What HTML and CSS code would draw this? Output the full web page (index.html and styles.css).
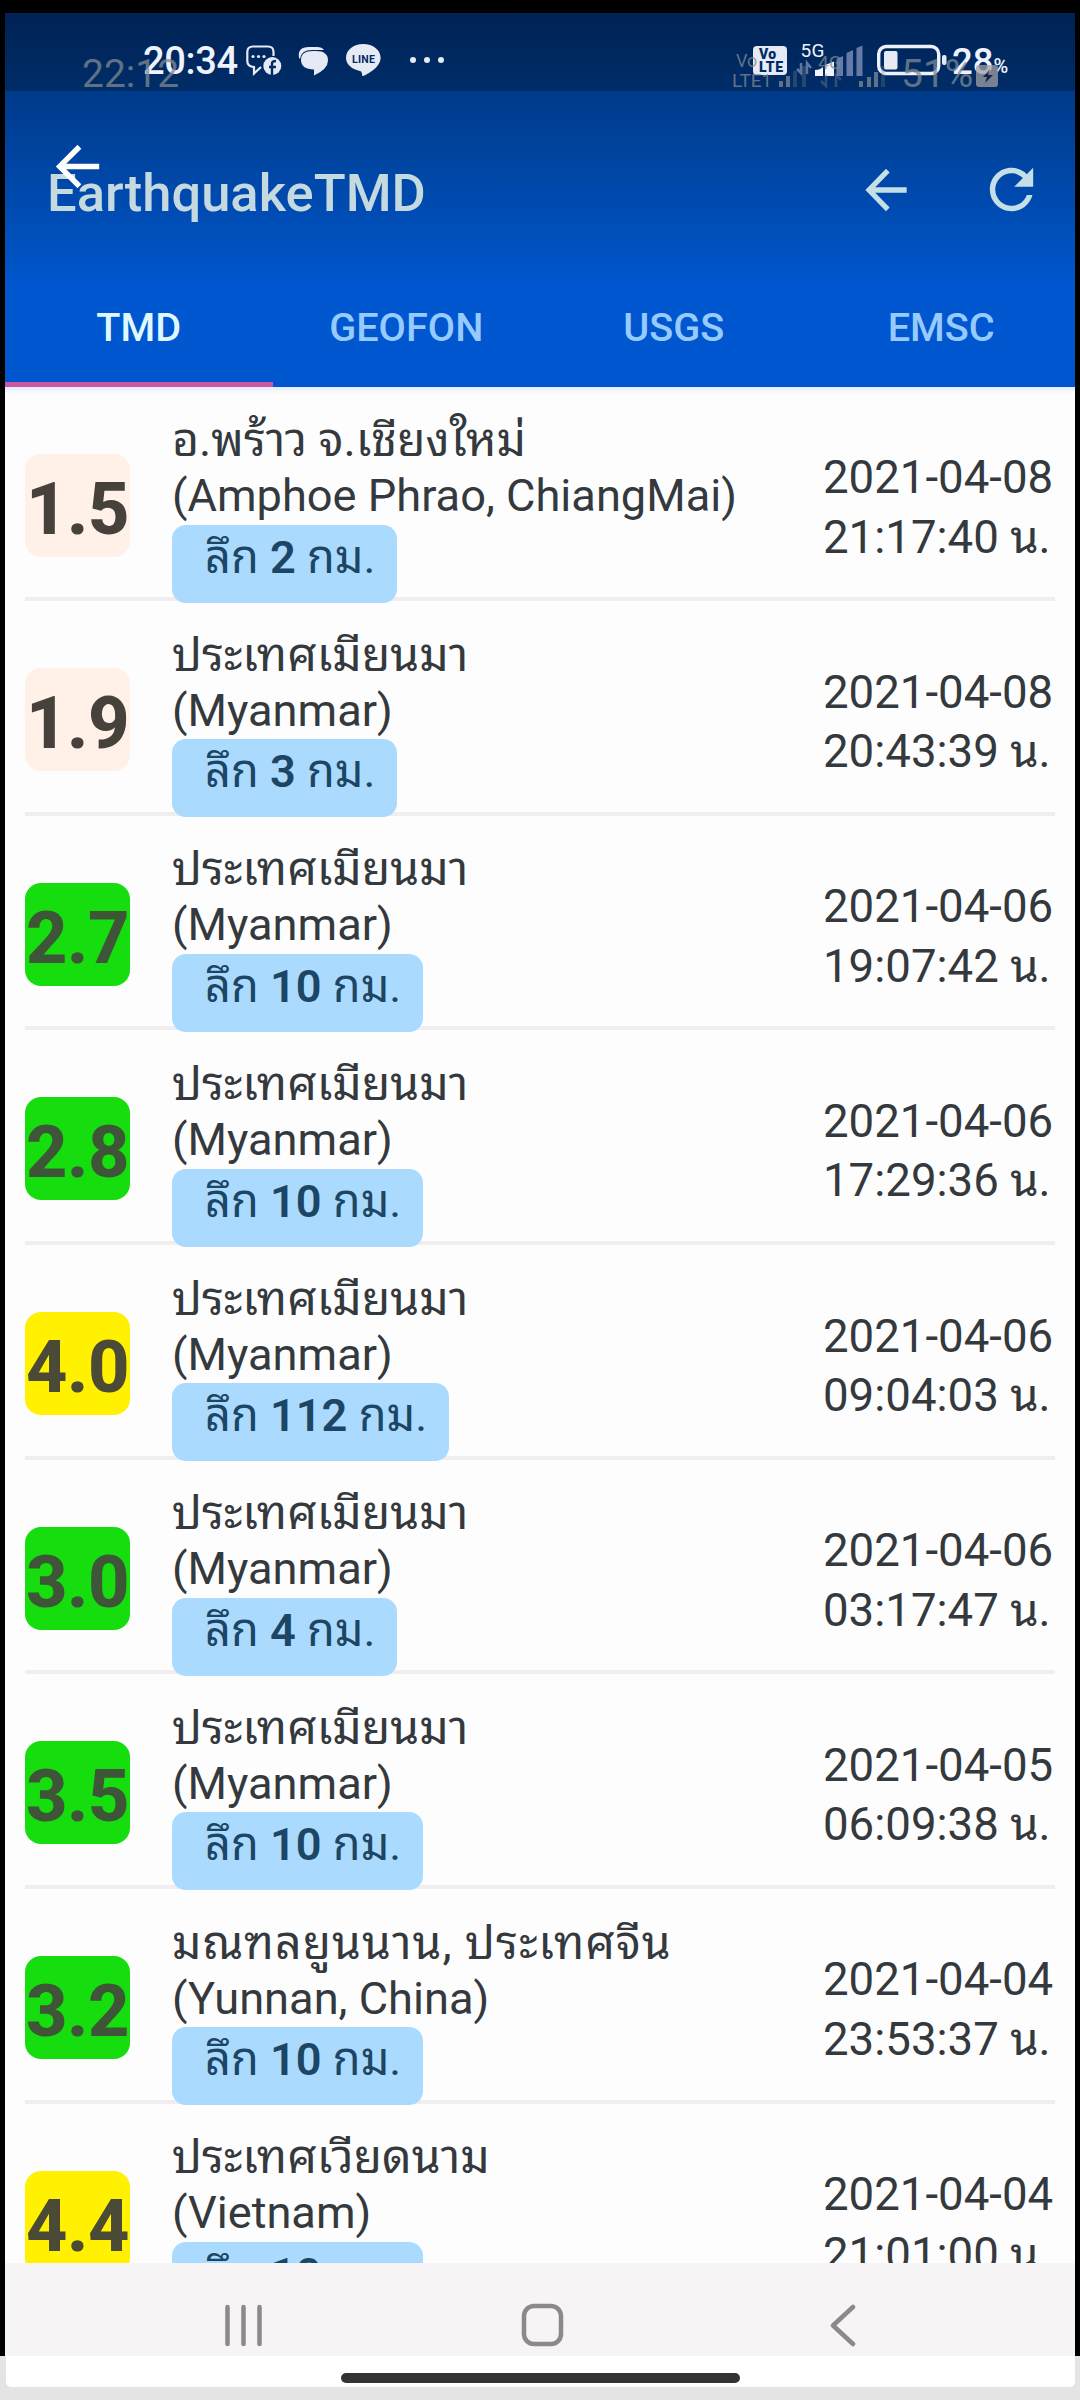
FILE: index.html
```html
<!DOCTYPE html>
<html lang="th">
<head>
<meta charset="utf-8">
<title>EarthquakeTMD</title>
<link rel="stylesheet" href="styles.css">
</head>
<body>
<div class="screen">
  <header class="header">
    <div class="statusbar">
      <span class="clock">20:34</span>
      <svg class="notif-icons" width="200" height="40" viewBox="244 40 200 40">
        <path d="M261 67L254 73.500V67Q247.300 66.500 247.300 61V52Q247.300 46.500 253 46.500H268Q273.500 46.500 273.500 52V56" fill="none" stroke="#e6eaf5" stroke-width="2.200"/>
        <circle cx="253" cy="56.500" r="1.600" fill="#e6eaf5"/><circle cx="258.500" cy="56.500" r="1.600" fill="#e6eaf5"/><circle cx="264" cy="56.500" r="1.600" fill="#e6eaf5"/>
        <circle cx="272.300" cy="66" r="9" fill="#e6eaf5"/>
        <path d="M272 75V63.500Q272 61 276 61M269 67H276" fill="none" stroke="#002a63" stroke-width="2.400"/>
        <path d="M299 58Q297 47 309 47H317Q322 47 324 50H312Q301 50 300 59Z" fill="#e6eaf5"/>
        <path d="M313 51H316Q328 51 328 60.500Q328 69 314 75.500V69.500Q301 69 301 60Q301 51 313 51Z" fill="#e6eaf5"/>
        <path d="M363.300 44C353.500 44 346 50 346 57.800C346 64.500 352 69.500 360.500 71.200C362.500 71.700 361.500 76.500 363.500 76C367 74.500 380.600 67.500 380.600 57.800C380.600 50 373 44 363.300 44Z" fill="#e6eaf5"/>
        <text x="352" y="62.500" class="line-label" textLength="23">LINE</text>
        <circle cx="413" cy="60" r="3" fill="#e6eaf5"/><circle cx="427" cy="60" r="3" fill="#e6eaf5"/><circle cx="441" cy="60" r="3" fill="#e6eaf5"/>
      </svg>
      <svg class="signal-icons" width="200" height="40" viewBox="750 40 200 40">
        <rect x="753" y="46" width="34" height="29" rx="4" fill="#e6eaf5"/>
        <text x="759" y="58.500" class="volte-label" textLength="17">Vo</text>
        <text x="759" y="71.500" class="volte-label" textLength="24">LTE</text>
        <text x="800.500" y="56.500" class="net-label" textLength="24">5G</text>
        <path d="M801 63V73L797 69M807 74V63L811 68" fill="none" stroke="#61769f" stroke-width="2.500"/>
        <path d="M815 76V70Q820 70 823 67V76ZM825 76V65L834 61.500V76Z" fill="#f2f4fb"/>
        <path d="M836.500 76V59L843 56V76ZM846.500 76V53L853 50V76ZM856.500 76V48L862.500 45.500V76Z" fill="#667aa8"/>
        <rect x="878.700" y="46.500" width="60" height="27" rx="7.500" fill="none" stroke="#eef1fb" stroke-width="3.400"/>
        <rect x="884" y="51" width="13.500" height="18.500" rx="2" fill="#e6eaf5"/>
        <rect x="942" y="55" width="4.500" height="10" rx="2" fill="#e6eaf5"/>
      </svg>
      <span class="battery-level">28</span><span class="battery-unit">%</span>
    </div>
    <div class="toolbar">
      <h1 class="title">EarthquakeTMD</h1>
      <svg class="tool-back" width="62" height="64" viewBox="0 0 24 24" preserveAspectRatio="none"><path d="M20 11H7.830l5.590-5.590L12 4l-8 8 8 8 1.410-1.410L7.830 13H20v-2z"/></svg>
      <svg class="tool-refresh" width="65" height="65" viewBox="0 0 24 24"><path d="M17.650 6.350C16.200 4.900 14.210 4 12 4c-4.420 0-7.990 3.580-7.990 8s3.570 8 7.990 8c3.730 0 6.840-2.550 7.730-6h-2.080c-.82 2.330-3.040 4-5.650 4-3.310 0-6-2.690-6-6s2.690-6 6-6c1.660 0 3.140.69 4.220 1.780L13 11h7V4l-2.350 2.350z"/></svg>
    </div>
    <nav class="tabs">
      <a class="tab tab-active">TMD</a>
      <a class="tab">GEOFON</a>
      <a class="tab">USGS</a>
      <a class="tab">EMSC</a>
    </nav>
    <div class="status-ghost">
      <span class="ghost-clock">22:12</span>
      <svg width="280" height="44" viewBox="728 48 280 44" fill="#7f8a94">
        <text x="736" y="67" font-size="18">Vo</text>
        <text x="732" y="86.500" font-size="19" textLength="40">LTE1</text>
        <path d="M779 87V81H783V87ZM786 87V76H790V87Z"/>
        <path d="M793 87V71H797V87ZM802 87V66H806V87Z" opacity=".4"/>
        <text x="818" y="69" font-size="19">4G</text>
        <path d="M826 74V86L821 81M836 87V75L841 80" fill="none" stroke="#7f8a94" stroke-width="2.500" opacity=".5"/>
        <path d="M859 87V81H863V87ZM867 87V77H871V87ZM874 87V72H878V87Z"/><path d="M881 87V66H885V87Z" opacity=".35"/>
        <rect x="976" y="65" width="22" height="22" rx="3" fill="#a09fa3"/>
        <path d="M990 69L983 77H987L985 83L993 75H988Z" fill="#1c2440"/>
      </svg>
      <span class="ghost-battery">51%</span>
    </div>
    <svg class="overlay-back" width="65" height="65" viewBox="0 0 24 24"><path d="M20 11H7.830l5.590-5.590L12 4l-8 8 8 8 1.410-1.410L7.830 13H20v-2z"/></svg>
  </header>
  <main class="list">
    <article class="quake"><div class="mag mag-low">1.5</div><div class="place"><p class="th">อ.พร้าว จ.เชียงใหม่</p><p>(Amphoe Phrao, ChiangMai)</p><span class="depth">ลึก <b>2</b> กม.</span></div><div class="time"><p>2021-04-08</p><p>21:17:40 น.</p></div></article>
    <article class="quake"><div class="mag mag-low">1.9</div><div class="place"><p class="th">ประเทศเมียนมา</p><p>(Myanmar)</p><span class="depth">ลึก <b>3</b> กม.</span></div><div class="time"><p>2021-04-08</p><p>20:43:39 น.</p></div></article>
    <article class="quake"><div class="mag mag-mid">2.7</div><div class="place"><p class="th">ประเทศเมียนมา</p><p>(Myanmar)</p><span class="depth">ลึก <b>10</b> กม.</span></div><div class="time"><p>2021-04-06</p><p>19:07:42 น.</p></div></article>
    <article class="quake"><div class="mag mag-mid">2.8</div><div class="place"><p class="th">ประเทศเมียนมา</p><p>(Myanmar)</p><span class="depth">ลึก <b>10</b> กม.</span></div><div class="time"><p>2021-04-06</p><p>17:29:36 น.</p></div></article>
    <article class="quake"><div class="mag mag-high">4.0</div><div class="place"><p class="th">ประเทศเมียนมา</p><p>(Myanmar)</p><span class="depth">ลึก <b>112</b> กม.</span></div><div class="time"><p>2021-04-06</p><p>09:04:03 น.</p></div></article>
    <article class="quake"><div class="mag mag-mid">3.0</div><div class="place"><p class="th">ประเทศเมียนมา</p><p>(Myanmar)</p><span class="depth">ลึก <b>4</b> กม.</span></div><div class="time"><p>2021-04-06</p><p>03:17:47 น.</p></div></article>
    <article class="quake"><div class="mag mag-mid">3.5</div><div class="place"><p class="th">ประเทศเมียนมา</p><p>(Myanmar)</p><span class="depth">ลึก <b>10</b> กม.</span></div><div class="time"><p>2021-04-05</p><p>06:09:38 น.</p></div></article>
    <article class="quake"><div class="mag mag-mid">3.2</div><div class="place"><p class="th th-wide">มณฑลยูนนาน, ประเทศจีน</p><p>(Yunnan, China)</p><span class="depth">ลึก <b>10</b> กม.</span></div><div class="time"><p>2021-04-04</p><p>23:53:37 น.</p></div></article>
    <article class="quake"><div class="mag mag-high">4.4</div><div class="place"><p class="th">ประเทศเวียดนาม</p><p>(Vietnam)</p><span class="depth">ลึก <b>10</b> กม.</span></div><div class="time"><p>2021-04-04</p><p>21:01:00 น.</p></div></article>
  </main>
  <nav class="navbar">
    <svg width="44" height="44" viewBox="0 0 44 44"><path d="M6.500 4V41M22.500 4V41M38.500 4V41"/></svg>
    <svg width="44" height="44" viewBox="0 0 44 44"><rect x="4" y="3" width="37" height="38" rx="10"/></svg>
    <svg width="44" height="44" viewBox="0 0 44 44"><path d="M34 4L14 22.500L34 41"/></svg>
  </nav>
</div>
<footer class="gesture"><div class="gesture-area"><div class="gesture-bar"></div></div></footer>
</body>
</html>
```
FILE: styles.css
```css
* { box-sizing: border-box; }
body {
  margin: 0;
  width: 1080px;
  height: 2400px;
  overflow: hidden;
  background: #e4e4e4;
  font-family: Roboto, "Noto Sans Thai Looped", sans-serif;
}
p, h1 { margin: 0; }
.screen {
  height: 2356px;
  padding: 13px 5px 0;
  background: #000;
  display: flex;
  flex-direction: column;
}

/* header */
.header {
  position: relative;
  flex: none;
  height: 373.500px;
  background: linear-gradient(#00368a 0, #003a8a 78px, #0054c6 255px, #0057d0 275px, #0056cf 100%);
  border-radius: 4px 4px 0 0;
}
.statusbar {
  height: 77.500px;
  display: flex;
  align-items: flex-start;
  padding: 0 0 0 138px;
  background: linear-gradient(#002254, #002d68);
  color: #eef2fc;
}
.clock {
  width: 101px;
  font-size: 38px;
  font-weight: 500;
  line-height: 50px;
  margin-top: 23px;
  letter-spacing: -0.300px;
}
.notif-icons, .signal-icons { margin-top: 27px; }
.notif-icons { margin-right: 306px; flex: none; }
.signal-icons { flex: none; }
.line-label { font: 700 10.500px Roboto, sans-serif; fill: #002a63; }
.volte-label { font: 900 14px Roboto, sans-serif; fill: #002a63; }
.net-label { font: 400 19px Roboto, sans-serif; fill: #eef2fc; }
.battery-level { font-size: 36.500px; font-weight: 500; line-height: 50px; margin: 24px 0 0 2px; }
.battery-unit { font-size: 20px; font-weight: 500; line-height: 50px; margin-top: 28px; }

.toolbar { height: 177.500px; display: flex; align-items: flex-start; }
.title {
  width: 808px;
  padding-left: 42px;
  margin-top: 72.500px;
  font-size: 52.500px;
  font-weight: 500;
  line-height: 60px;
  color: #c5dadf;
}
.tool-back, .tool-refresh { flex: none; fill: #c5dfe6; }
.tool-back { margin: 67px 0 0 42px; }
.tool-refresh { margin: 66px 0 0 62px; }

.tabs { height: 118.500px; display: grid; grid-template-columns: repeat(4, 1fr); }
.tab {
  height: 118.500px;
  font-size: 39.700px;
  font-weight: 500;
  line-height: 120px;
  text-align: center;
  color: #97cbff;
}
.tab-active { color: #dff8ff; border-bottom: 5px solid #c858a4; }

.status-ghost {
  position: absolute;
  left: 0;
  top: 0;
  width: 1070px;
  height: 77px;
  opacity: .75;
  color: #7f8a90;
  font-size: 39px;
}
.ghost-clock { position: absolute; left: 77px; top: 36px; line-height: 50px; }
.status-ghost svg { position: absolute; left: 723px; top: 35px; }
.ghost-battery { position: absolute; left: 896px; top: 36px; line-height: 50px; }
.overlay-back { position: absolute; left: 39.500px; top: 121px; fill: #fff; }

/* earthquake list */
.list {
  height: 1876px;
  overflow: hidden;
  padding: 0 20px;
  background: #fefdfe;
  color: #34393d;
  font-size: 45.200px;
  box-shadow: inset 0 6px 5px -3px #dfebfa;
}
.quake {
  height: 214.640px;
  border-bottom: 4px solid #f0eeef;
  display: grid;
  grid-template-columns: 147px 1fr 232px;
  align-items: start;
}
.mag {
  width: 105px;
  height: 103px;
  margin-top: 67px;
  border-radius: 16px;
  font-size: 72px;
  font-weight: 800;
  line-height: 111px;
  text-align: center;
  letter-spacing: -0.400px;
}
.mag-low { background: #fff0e8; color: #47413c; }
.mag-mid { background: #16de0e; color: #3e5538; }
.mag-high { background: #fff100; color: #4a4a36; }
.place { padding-top: 26.700px; line-height: 55px; white-space: nowrap; }
.place .th { font-size: 46.400px; }
.place .th-wide { letter-spacing: 1px; }
.depth {
  display: block;
  width: max-content;
  height: 78px;
  margin-top: 1.500px;
  padding: 0 22px 0 33px;
  border-radius: 14px;
  background: #abdaff;
  color: #1d4664;
  line-height: 66px;
}
.depth b { font-weight: 600; }
.time { padding-top: 61.600px; font-size: 45.600px; line-height: 59.400px; white-space: nowrap; }

/* navigation buttons */
.navbar {
  flex: 1;
  display: flex;
  align-items: center;
  gap: 255px;
  padding: 32px 0 0 216px;
  background: #f6f4f5;
}
.navbar svg { fill: none; stroke: #8b898a; stroke-width: 4.500; stroke-linecap: round; stroke-linejoin: round; }

.gesture { height: 44px; padding: 0 5px 13px 6px; background: #e4e4e4; }
.gesture-area { height: 31px; background: #fff; display: flex; justify-content: center; padding-top: 16.500px; border-radius: 0 0 5px 5px; }
.gesture-bar { width: 399px; height: 10.500px; border-radius: 5px; background: #333; }
```
